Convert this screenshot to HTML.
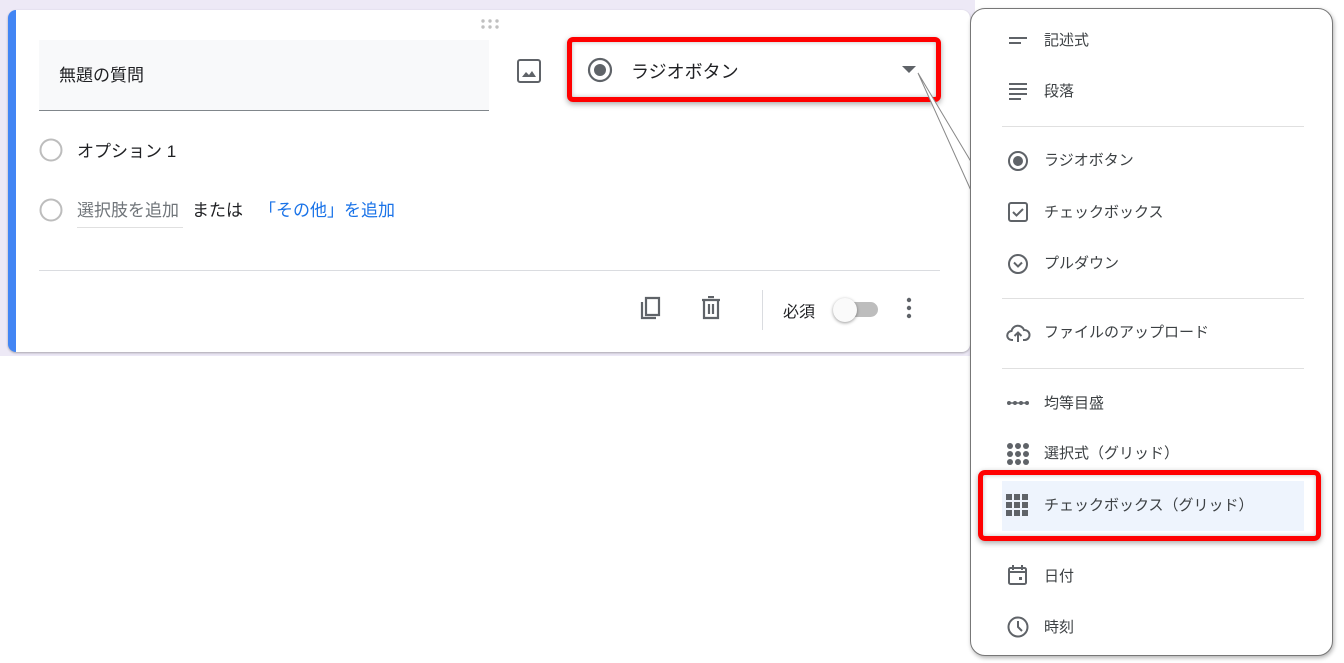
<!DOCTYPE html>
<html><head><meta charset="utf-8"><style>
*{margin:0;padding:0;box-sizing:border-box}
body{width:1344px;height:663px;background:#fff;position:relative;overflow:hidden;font-family:"Liberation Sans","Noto Sans CJK JP",sans-serif;color:#202124}
.abs{position:absolute}
.bg{left:0;top:0;width:975px;height:356px;background:#ede9f6}
.card{left:8px;top:10px;width:962px;height:342px;background:#fff;border-radius:8px;border-left:8px solid #4285f4;box-shadow:0 1px 2px rgba(0,0,0,.3)}
.t{font-size:16px;white-space:nowrap}
.mi{position:absolute;left:1044px;font-size:15px;color:#3c4043;white-space:nowrap}
.ic{position:absolute;left:1006px}
.hr{position:absolute;left:1002px;width:302px;height:1px;background:#e0e0e0}
</style></head><body>
<div class="abs bg"></div>
<div class="abs card"></div>
<svg class="abs" style="left:480px;top:18px" width="22" height="12"><g fill="#c0c0c0"><circle cx="3" cy="3" r="1.7"/><circle cx="10" cy="3" r="1.7"/><circle cx="17" cy="3" r="1.7"/><circle cx="3" cy="9" r="1.7"/><circle cx="10" cy="9" r="1.7"/><circle cx="17" cy="9" r="1.7"/></g></svg>
<div class="abs" style="left:39px;top:40px;width:450px;height:71px;background:#f8f9fa;border-bottom:1px solid #80868b"></div>
<div class="abs t" style="left:59px;top:61px;font-size:17px">無題の質問</div>
<svg class="abs" style="left:517px;top:59px" width="24" height="24" viewBox="0 0 24 24"><rect x="1" y="1" width="22" height="22" rx="2" fill="none" stroke="#5f6368" stroke-width="2"/><path d="M5 18l4-5 3 3 3-4 4 6z" fill="#5f6368"/></svg>
<svg class="abs" style="left:39px;top:138px" width="24" height="24"><circle cx="12" cy="12" r="10.5" fill="none" stroke="#bdbdbd" stroke-width="2"/></svg>
<div class="abs t" style="left:77px;top:137px;font-size:17px">オプション 1</div>
<svg class="abs" style="left:39px;top:198px" width="24" height="24"><circle cx="12" cy="12" r="10.5" fill="none" stroke="#bdbdbd" stroke-width="2"/></svg>
<div class="abs t" style="left:77px;top:196px;color:#70757a;font-size:17px">選択肢を追加</div>
<div class="abs" style="left:77px;top:227px;width:106px;height:1px;background:#e0e0e0"></div>
<div class="abs t" style="left:192px;top:196px;font-size:17px">または</div>
<div class="abs t" style="left:259px;top:196px;color:#1a73e8;font-size:17px">「その他」を追加</div>
<div class="abs" style="left:39px;top:270px;width:901px;height:1px;background:#dadce0"></div>
<svg class="abs" style="left:639px;top:295px" width="24" height="26" viewBox="0 0 24 26"><path d="M7 3h13v17H7z" fill="none" stroke="#5f6368" stroke-width="2.2"/><path d="M3 7v16h14" fill="none" stroke="#5f6368" stroke-width="2.2"/></svg>
<svg class="abs" style="left:700px;top:296px" width="22" height="24" viewBox="0 0 22 24"><path d="M2 4h18M8 1h6M4 4v18h14V4M9 8v10M13 8v10" fill="none" stroke="#5f6368" stroke-width="2.2"/></svg>
<div class="abs" style="left:762px;top:290px;width:1px;height:40px;background:#dadce0"></div>
<div class="abs t" style="left:783px;top:298px;font-size:16px">必須</div>
<div class="abs" style="left:836px;top:302px;width:42px;height:15px;border-radius:8px;background:#bdbdbd"></div>
<div class="abs" style="left:833px;top:298px;width:24px;height:24px;border-radius:50%;background:#fafafa;box-shadow:0 1px 3px rgba(0,0,0,.4)"></div>
<svg class="abs" style="left:905px;top:296px" width="8" height="24"><g fill="#5f6368"><circle cx="4" cy="4" r="2.2"/><circle cx="4" cy="12" r="2.2"/><circle cx="4" cy="20" r="2.2"/></g></svg>
<svg class="abs" style="left:587px;top:57px" width="26" height="26"><circle cx="13" cy="13" r="11" fill="none" stroke="#5f6368" stroke-width="2.2"/><circle cx="13" cy="13" r="6" fill="#5f6368"/></svg>
<div class="abs t" style="left:631px;top:58px;font-size:18px">ラジオボタン</div>
<svg class="abs" style="left:902px;top:66px" width="14" height="8"><path d="M0 0h14L7 7z" fill="#5f6368"/></svg>
<div class="abs" style="left:567px;top:37px;width:374px;height:65px;border:5px solid #f00;border-radius:6px;box-shadow:0 2px 6px rgba(0,0,0,.35),inset 0 0 5px rgba(0,0,0,.25)"></div>
<svg class="abs" style="left:915px;top:70px" width="70" height="140"><path d="M3 3L58 125L58 95Z" fill="#fff" stroke="#888" stroke-width="1"/></svg>
<div class="abs" style="left:970px;top:8px;width:363px;height:648px;background:#fff;border:1px solid #777;border-radius:15px;box-shadow:1px 2px 4px rgba(0,0,0,.3)"></div>
<svg class="ic" style="top:30px" width="24" height="20"><path d="M3 8h18M3 13h12" stroke="#5f6368" stroke-width="2"/></svg>
<div class="mi" style="top:29px">記述式</div>
<svg class="ic" style="top:80px" width="24" height="20"><path d="M3 4h18M3 9h18M3 14h18M3 19h12" stroke="#5f6368" stroke-width="2"/></svg>
<div class="mi" style="top:80px">段落</div>
<div class="hr" style="top:126px"></div>
<svg class="ic" style="top:149px" width="24" height="24"><circle cx="12" cy="12" r="9" fill="none" stroke="#5f6368" stroke-width="2"/><circle cx="12" cy="12" r="5" fill="#5f6368"/></svg>
<div class="mi" style="top:149px">ラジオボタン</div>
<svg class="ic" style="top:200px" width="24" height="24"><rect x="3" y="3" width="18" height="18" rx="2" fill="none" stroke="#5f6368" stroke-width="2"/><path d="M7 12l3.5 3.5L17 9" fill="none" stroke="#5f6368" stroke-width="2"/></svg>
<div class="mi" style="top:201px">チェックボックス</div>
<svg class="ic" style="top:252px" width="24" height="24"><circle cx="12" cy="12" r="9" fill="none" stroke="#5f6368" stroke-width="2"/><path d="M8 10.5l4 4 4-4" fill="none" stroke="#5f6368" stroke-width="2"/></svg>
<div class="mi" style="top:252px">プルダウン</div>
<div class="hr" style="top:298px"></div>
<svg class="ic" style="top:321px" width="26" height="24"><path d="M7 19H6a4.5 4.5 0 0 1-.5-9A6.5 6.5 0 0 1 18 9a4.5 4.5 0 0 1 1 10h-2" fill="none" stroke="#5f6368" stroke-width="2"/><path d="M12 21v-9M8.5 15l3.5-3.5 3.5 3.5" fill="none" stroke="#5f6368" stroke-width="2"/></svg>
<div class="mi" style="top:321px">ファイルのアップロード</div>
<div class="hr" style="top:368px"></div>
<svg class="ic" style="top:393px" width="24" height="20"><path d="M2 10h20" stroke="#5f6368" stroke-width="1.5"/><g fill="#5f6368"><circle cx="3" cy="10" r="2"/><circle cx="9" cy="10" r="2"/><circle cx="15" cy="10" r="2"/><circle cx="21" cy="10" r="2"/></g></svg>
<div class="mi" style="top:392px">均等目盛</div>
<svg class="ic" style="top:442px" width="26" height="26"><g fill="#5f6368"><circle cx="4" cy="4" r="3"/><circle cx="12" cy="4" r="3"/><circle cx="20" cy="4" r="3"/><circle cx="4" cy="12" r="3"/><circle cx="12" cy="12" r="3"/><circle cx="20" cy="12" r="3"/><circle cx="4" cy="20" r="3"/><circle cx="12" cy="20" r="3"/><circle cx="20" cy="20" r="3"/></g></svg>
<div class="mi" style="top:442px">選択式（グリッド）</div>
<div class="abs" style="left:1002px;top:481px;width:302px;height:50px;background:#eef4fd"></div>
<svg class="ic" style="top:494px" width="26" height="26"><g fill="#5f6368"><rect x="0" y="0" width="6" height="6"/><rect x="8" y="0" width="6" height="6"/><rect x="16" y="0" width="6" height="6"/><rect x="0" y="8" width="6" height="6"/><rect x="8" y="8" width="6" height="6"/><rect x="16" y="8" width="6" height="6"/><rect x="0" y="16" width="6" height="6"/><rect x="8" y="16" width="6" height="6"/><rect x="16" y="16" width="6" height="6"/></g></svg>
<div class="mi" style="top:494px">チェックボックス（グリッド）</div>
<div class="abs" style="left:978px;top:470px;width:343px;height:71px;border:5px solid #f00;border-radius:7px;box-shadow:0 2px 6px rgba(0,0,0,.35),inset 0 0 5px rgba(0,0,0,.25)"></div>
<svg class="ic" style="top:563px" width="24" height="24"><rect x="3" y="5" width="17" height="16" rx="1.5" fill="none" stroke="#5f6368" stroke-width="2"/><path d="M3 9h17M7 2v5M16 2v5" stroke="#5f6368" stroke-width="2"/><rect x="13" y="14" width="3" height="3" fill="#5f6368"/></svg>
<div class="mi" style="top:565px">日付</div>
<svg class="ic" style="top:615px" width="24" height="24"><circle cx="12" cy="12" r="9.5" fill="none" stroke="#5f6368" stroke-width="2"/><path d="M12 6v6l4 4" fill="none" stroke="#5f6368" stroke-width="2"/></svg>
<div class="mi" style="top:616px">時刻</div>
</body></html>
